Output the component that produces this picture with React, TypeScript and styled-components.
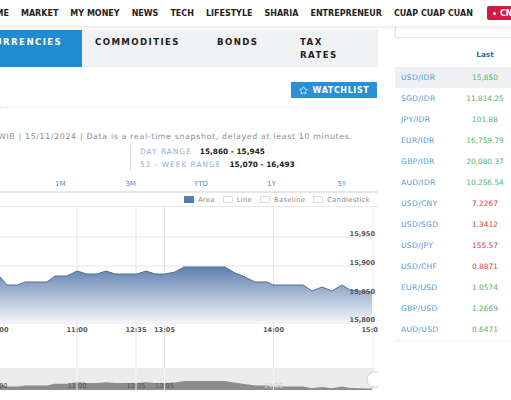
import React from 'react';
import styled, { createGlobalStyle } from 'styled-components';
import { Star } from 'lucide-react';

const GlobalStyle = createGlobalStyle`
  html, body { margin: 0; padding: 0; background: #fff; }
  body {
    width: 511px;
    height: 400px;
    overflow: hidden;
    font-family: "DejaVu Sans", "Noto Sans", sans-serif;
  }
`;

const Page = styled.div`
  width: 511px;
  height: 400px;
  overflow: hidden;
`;

const TopNav = styled.nav`
  display: flex;
  align-items: center;
  gap: 12px;
  height: 26px;
  margin-left: -18px;
  white-space: nowrap;
  box-shadow: 0 2px 3px rgba(0, 0, 0, 0.07);
  position: relative;
  z-index: 1;
`;

const NavLink = styled.span`
  font-size: 8px;
  font-weight: 700;
  color: #222;
`;

const LiveButton = styled.span`
  display: flex;
  align-items: center;
  gap: 4px;
  height: 14px;
  margin-left: 2px;
  padding: 0 6px;
  border-radius: 2px;
  background: #d31a40;
  color: #fff;
  font-size: 8px;
  font-weight: 700;
  &::before {
    content: '';
    width: 3px;
    height: 3px;
    border-radius: 50%;
    background: #fff;
  }
`;

const Body = styled.div`
  display: flex;
`;

const Main = styled.div`
  width: 378px;
  flex: none;
`;

const Tabs = styled.div`
  display: flex;
  height: 37px;
  margin-top: 4px;
  background: #f0f2f4;
`;

const Tab = styled.div<{ $active?: boolean; $w: number }>`
  box-sizing: border-box;
  width: ${({ $w }) => $w}px;
  flex: none;
  padding: 6px 0 0 13px;
  font-size: 8.6px;
  font-weight: 700;
  letter-spacing: 1.4px;
  line-height: 13px;
  white-space: ${({ $active }) => ($active ? 'nowrap' : 'normal')};
  color: ${({ $active }) => ($active ? '#fff' : '#222')};
  background: ${({ $active }) => ($active ? '#1f8bd0' : 'transparent')};
  margin-left: ${({ $active }) => ($active ? '-26px' : '0')};
`;

const WatchRow = styled.div`
  display: flex;
  justify-content: flex-end;
  padding: 15px 1px 0 0;
`;

const WatchButton = styled.button`
  display: flex;
  align-items: center;
  justify-content: center;
  gap: 5px;
  width: 86px;
  height: 16px;
  border: 0;
  padding: 0;
  background: #2a8fd4;
  color: #fff;
  font-family: inherit;
  font-size: 8px;
  font-weight: 700;
  letter-spacing: 0.6px;
`;

const Dotted = styled.div`
  margin-top: 9px;
  border-top: 1px dotted #ddd;
`;

const Info = styled.div`
  margin: 24px 0 0 -2px;
  font-size: 7.8px;
  letter-spacing: 0.68px;
  line-height: 10px;
  color: #8a8a8a;
  white-space: nowrap;
`;

const Ranges = styled.div`
  margin: 3px 0 0 130px;
  padding-left: 9px;
  border-left: 1px solid #ddd;
`;

const RangeRow = styled.div`
  font-size: 7.4px;
  line-height: 13px;
  white-space: nowrap;
`;

const RangeLabel = styled.span`
  color: #8fb0d2;
  letter-spacing: 1px;
  margin-right: 8px;
`;

const RangeValue = styled.span`
  color: #222;
  font-weight: 700;
`;

const Periods = styled.div`
  display: grid;
  grid-template-columns: repeat(5, 70.4px);
  margin-top: 6px;
  padding-left: 25px;
  height: 14px;
  border-bottom: 2px solid #e4e6e8;
`;

const Period = styled.span`
  text-align: center;
  font-size: 7px;
  line-height: 14px;
  color: #3c8ed0;
`;

const Legend = styled.div`
  display: flex;
  justify-content: flex-end;
  align-items: center;
  gap: 8px;
  height: 13px;
  padding-right: 8px;
  border-bottom: 1px solid #e8e8e8;
`;

const LegendItem = styled.span`
  display: flex;
  align-items: center;
  gap: 4px;
  font-size: 6.8px;
  letter-spacing: 0.3px;
  color: #8a8a8a;
`;

const Swatch = styled.span<{ $on?: boolean }>`
  width: 10px;
  height: 7px;
  box-sizing: border-box;
  border: 1px solid ${({ $on }) => ($on ? '#5a7db0' : '#ddd')};
  background: ${({ $on }) => ($on ? '#5a7db0' : '#fff')};
`;

const ChartSvg = styled.svg`
  display: block;
  font-family: "DejaVu Sans", sans-serif;
`;

const Side = styled.aside`
  margin-left: 17px;
  width: 140px;
  flex: none;
`;

const SideTop = styled.div`
  height: 11px;
  border-left: 1px solid #e6e6e6;
  border-bottom: 1px solid #e6e6e6;
  box-shadow: 0 1px 2px rgba(0, 0, 0, 0.04);
`;

const TableHead = styled.div`
  display: flex;
  height: 29px;
  padding-top: 4px;
  box-sizing: border-box;
  align-items: center;
`;

const Row = styled.div<{ $hl?: boolean }>`
  display: flex;
  align-items: center;
  height: 21px;
  background: ${({ $hl }) => ($hl ? '#eef0f4' : 'transparent')};
`;

const Pair = styled.span`
  width: 65px;
  padding-left: 6px;
  box-sizing: border-box;
  font-size: 7.6px;
  letter-spacing: 0.3px;
  color: #4f9ad8;
`;

const Value = styled.span<{ $up?: boolean; $head?: boolean }>`
  width: 50px;
  text-align: center;
  font-size: 7.4px;
  font-weight: ${({ $head }) => ($head ? 700 : 400)};
  color: ${({ $head, $up }) => ($head ? '#2a6fae' : $up ? '#5bb35f' : '#e03a44')};
`;

const TableEnd = styled.div`
  border-top: 1px solid #eee;
`;

const navItems = ['HOME', 'MARKET', 'MY MONEY', 'NEWS', 'TECH', 'LIFESTYLE', 'SHARIA', 'ENTREPRENEUR', 'CUAP CUAP CUAN'];

const rates: [string, string, boolean][] = [
  ['USD/IDR', '15,850', true],
  ['SGD/IDR', '11,814.25', true],
  ['JPY/IDR', '101.88', true],
  ['EUR/IDR', '16,759.79', true],
  ['GBP/IDR', '20,080.37', true],
  ['AUD/IDR', '10,256.54', true],
  ['USD/CNY', '7.2267', false],
  ['USD/SGD', '1.3412', false],
  ['USD/JPY', '155.57', false],
  ['USD/CHF', '0.8871', false],
  ['EUR/USD', '1.0574', true],
  ['GBP/USD', '1.2669', true],
  ['AUD/USD', '0.6471', true],
];

const series: [number, number][] = [
  [-10, 276], [0, 278], [7, 286], [18, 286], [25, 283], [47, 283], [55, 277], [67, 277], [77, 272],
  [87, 275], [97, 275], [106, 272], [115, 275], [137, 275], [146, 272], [155, 275],
  [165, 275], [175, 273], [184, 268], [225, 268], [235, 274], [245, 278], [255, 283],
  [267, 283], [273, 286], [303, 286], [312, 292], [322, 288], [332, 292], [342, 286],
  [350, 291], [372, 293],
];

const linePath = series.map(([x, y], i) => `${i ? 'L' : 'M'}${x} ${y}`).join(' ');
const areaPath = `${linePath} L372 324 L-10 324 Z`;
const navPts = series.map(([x, y]) => [x, 382 + (y - 268) * 0.3] as [number, number]);
const navPath = `${navPts.map(([x, y], i) => `${i ? 'L' : 'M'}${x} ${y}`).join(' ')} L372 391 L-10 391 Z`;

const vLines = [77, 136, 164.5, 273.5];
const hLines: [number, string][] = [[238, '15,950'], [267, '15,900'], [295.5, '15,850'], [324, '15,800']];
const times: [number, string][] = [[-2, '10:00'], [77, '11:00'], [136, '12:35'], [164.5, '13:05'], [273.5, '14:00'], [372, '15:00']];

const Chart = () => (
  <ChartSvg width={378} height={192} viewBox="0 208 378 192">
    <defs>
      <linearGradient id="area" x1="0" y1="0" x2="0" y2="1">
        <stop offset="0" stopColor="#5f80b0" />
        <stop offset="1" stopColor="#f4f6fa" />
      </linearGradient>
    </defs>
    {vLines.map((x) => (
      <line key={x} x1={x} x2={x} y1={208} y2={391} stroke="#e3e3e3" strokeWidth={1} />
    ))}
    <line x1={373} x2={373} y1={208} y2={368} stroke="#ececec" />
    {hLines.map(([y]) => (
      <line key={y} x1={0} x2={373} y1={y} y2={y} stroke="#e6e6e6" />
    ))}
    <path d={areaPath} fill="url(#area)" />
    <path d={linePath} fill="none" stroke="#4c6e9e" strokeWidth={1} />
    {hLines.map(([y, t]) => (
      <text key={t} x={375} y={y - 1} textAnchor="end" fontSize={6.6} fontWeight={700} fill="#555">{t}</text>
    ))}
    {times.map(([x, t]) => (
      <text key={t} x={x} y={333} textAnchor="middle" fontSize={6.6} fontWeight={700} fill="#555">{t}</text>
    ))}
    <rect x={0} y={369} width={374} height={22} fill="#ebebeb" />
    <path d={navPath} fill="#8c8c8c" />
    {vLines.map((x) => (
      <line key={`n${x}`} x1={x} x2={x} y1={369} y2={391} stroke="#f6f6f6" strokeWidth={1} />
    ))}
    {times.slice(0, 5).map(([x, t]) => (
      <text key={`n${t}`} x={x} y={389} textAnchor="middle" fontSize={6.6} fill={x > 200 ? '#cfcfcf' : '#555'}>{t}</text>
    ))}
    <rect x={367} y={373} width={16} height={15} rx={7} fill="#fff" stroke="#ccc" />
  </ChartSvg>
);

const App = () => (
  <Page>
    <GlobalStyle />
    <TopNav>
      {navItems.map((n) => (
        <NavLink key={n}>{n}</NavLink>
      ))}
      <LiveButton>CNBC TV</LiveButton>
    </TopNav>
    <Body>
      <Main>
        <Tabs>
          <Tab $active $w={108}>CURRENCIES</Tab>
          <Tab $w={122}>COMMODITIES</Tab>
          <Tab $w={83}>BONDS</Tab>
          <Tab $w={64}>TAX RATES</Tab>
        </Tabs>
        <WatchRow>
          <WatchButton>
            <Star size={9} strokeWidth={2} />
            WATCHLIST
          </WatchButton>
        </WatchRow>
        <Dotted />
        <Info>WIB | 15/11/2024 | Data is a real-time snapshot, delayed at least 10 minutes.</Info>
        <Ranges>
          <RangeRow>
            <RangeLabel>DAY RANGE</RangeLabel>
            <RangeValue>15,860 - 15,945</RangeValue>
          </RangeRow>
          <RangeRow>
            <RangeLabel>52 - WEEK RANGE</RangeLabel>
            <RangeValue>15,070 - 16,493</RangeValue>
          </RangeRow>
        </Ranges>
        <Periods>
          {['1M', '3M', 'YTD', '1Y', '5Y'].map((p) => (
            <Period key={p}>{p}</Period>
          ))}
        </Periods>
        <Legend>
          <LegendItem><Swatch $on />Area</LegendItem>
          <LegendItem><Swatch />Line</LegendItem>
          <LegendItem><Swatch />Baseline</LegendItem>
          <LegendItem><Swatch />Candlestick</LegendItem>
        </Legend>
        <Chart />
      </Main>
      <Side>
        <SideTop />
        <TableHead>
          <Pair />
          <Value $head>Last</Value>
        </TableHead>
        {rates.map(([p, v, up], i) => (
          <Row key={p} $hl={i === 0}>
            <Pair>{p}</Pair>
            <Value $up={up}>{v}</Value>
          </Row>
        ))}
        <TableEnd />
      </Side>
    </Body>
  </Page>
);

export default App;
